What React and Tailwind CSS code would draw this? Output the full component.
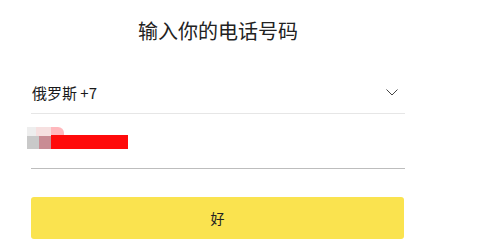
export default function App() {
  return (
    <div
      className="w-[495px] h-[250px] bg-white overflow-hidden"
      style={{ fontFamily: '"Noto Sans CJK SC", "Noto Sans", sans-serif' }}
    >
      <div className="ml-[31px] w-[374px] flex flex-col">
        {/* Title */}
        <h1 className="mt-[18px] h-[26px] text-center text-[20px] leading-[26px] text-[#222]">
          输入你的电话号码
        </h1>

        {/* Country selector */}
        <div className="mt-[40px] flex items-center justify-between h-[30px] border-b border-[#e6e6e6]">
          <span className="pl-px text-[15px] leading-[20px] text-[#1a1a1a] -mt-[11px]">俄罗斯 +7</span>
          <svg width="12" height="7" viewBox="0 0 12 7" className="mr-[7px] -mt-[12px]">
            <path d="M0.5 0.5 L6 6 L11.5 0.5" fill="none" stroke="#444" strokeWidth="1" />
          </svg>
        </div>

        {/* Redacted phone number */}
        <div className="h-[55px] border-b border-[#bdbdbd] pt-[13px]">
          <div className="-ml-[4px]">
            <div className="flex">
              <div className="w-[9px] h-[10px] bg-[#eeeeee]" />
              <div className="w-[15px] h-[10px] bg-[#f6e0e0]" />
              <div className="w-[13px] h-[10px] bg-[#ffb8bd] rounded-tr-[6px]" />
            </div>
            <div className="flex -mt-px">
              <div className="w-[12px] h-[13px] bg-[#c9c9c9]" />
              <div className="w-[12px] h-[13px] bg-[#c98c94]" />
              <div className="w-[77px] h-[14px] -mt-px bg-[#ff0a0a]" />
            </div>
          </div>
        </div>

        {/* Confirm button */}
        <button className="mt-[28px] h-[42px] w-[373px] rounded-[3px] bg-[#fae34f] text-[14px] text-[#222]">
          好
        </button>
      </div>
    </div>
  );
}
